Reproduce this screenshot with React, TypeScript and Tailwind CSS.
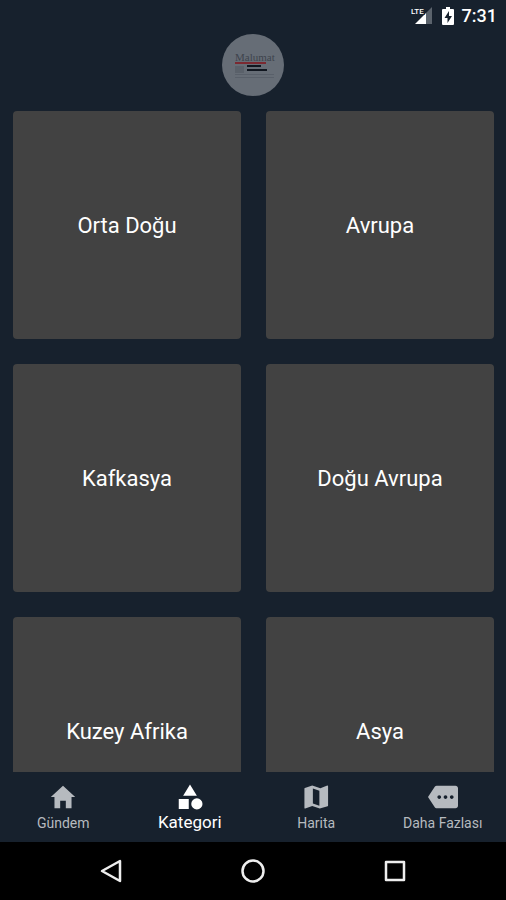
import React from "react";

const categories = ["Orta Doğu", "Avrupa", "Kafkasya", "Doğu Avrupa", "Kuzey Afrika", "Asya"];

const tabs = [
  { label: "Gündem", viewBox: "0 0 512 512", path: "M208 448V320h96v128h97.600V256H464L256 64 48 256h62.400v192z" },
  { label: "Kategori", viewBox: "0 0 24 24", active: true, path: "M12 2 6.500 11h11zM17.500 13a4.500 4.500 0 1 0 0 9 4.500 4.500 0 0 0 0-9zM3 13.500h8v8H3z" },
  {
    label: "Harita",
    viewBox: "0 0 24 24",
    path: "M21.200 2.800l-.16.03L15.500 5 9 2.800 3.100 4.700c-.21.07-.36.25-.36.48V20.700c0 .28.220.5.5.5l.16-.03L9 19.100l6 2.100 6.300-1.900c.21-.07.36-.25.36-.48V3.300c0-.28-.18-.5-.46-.5zM14.700 18.900l-5.200-1.800V5.200l5.200 1.800z",
  },
  {
    label: "Daha Fazlası",
    viewBox: "0 0 24 24",
    path: "M22 3H7c-.69 0-1.23.35-1.59.88L0 12l5.41 8.11c.36.53.97.89 1.66.89H22c1.1 0 2-.9 2-2V5c0-1.1-.9-2-2-2zM9 13.5c-.83 0-1.5-.67-1.5-1.5s.67-1.5 1.5-1.5 1.5.67 1.5 1.5-.67 1.5-1.5 1.5zm5 0c-.83 0-1.5-.67-1.5-1.5s.67-1.5 1.5-1.5 1.5.67 1.5 1.5-.67 1.5-1.5 1.5zm5 0c-.83 0-1.5-.67-1.5-1.5s.67-1.5 1.5-1.5 1.5.67 1.5 1.5-.67 1.5-1.5 1.5z",
  },
];

const StatusBar: React.FC = () => (
  <div className="flex h-8 shrink-0 items-center justify-end gap-2 pr-[9px] text-white">
    <svg className="h-5 w-6" viewBox="0 0 24 20" role="img" aria-label="LTE">
      <path d="M22 1v17H16V7z" fill="#5b636c" />
      <path d="M16 7v11H5z" fill="#fff" />
      <text x="1" y="8" fontSize="8" fontWeight="500" fill="#fff" stroke="#17212d" strokeWidth="2" paintOrder="stroke" className="font-['Roboto',sans-serif]">LTE</text>
    </svg>
    <svg className="h-5 w-3" viewBox="0 0 12 20" role="img" aria-label="Charging">
      <path d="M4 1h4v2h3q1 0 1 1v14q0 1-1 1H1q-1 0-1-1V4q0-1 1-1h3z" fill="#fff" />
      <path d="M7 5 2.500 12H5.500v5L10 10H7z" fill="#17212d" />
    </svg>
    <span className="text-lg font-medium">7:31</span>
  </div>
);

const Logo: React.FC = () => (
  <svg className="h-[62px] w-[62px]" viewBox="0 0 62 62" role="img" aria-label="Malumat">
    <circle cx="31" cy="31" r="31" fill="#666d76" />
    <text x="13" y="27" fontSize="11" fill="#3e444d" className="font-['Liberation_Serif',serif]">Malumat</text>
    <path d="M13 28h31v2H13z" fill="#7b2931" />
    <path d="M13 32h9v7h-9z" fill="#5a616a" />
    <path d="M25 31h14v2H25zM25 35h20v2H25z" fill="#10161f" />
    <path d="M13 40h39v1H13zM13 43h39v1H13z" fill="#59606a" />
  </svg>
);

const TabBar: React.FC = () => (
  <nav className="grid h-[70px] shrink-0 grid-cols-4">
    {tabs.map((tab) => (
      <button
        key={tab.label}
        type="button"
        aria-current={tab.active ? "page" : undefined}
        className={`flex flex-col items-center pt-[10px] whitespace-nowrap ${tab.active ? "text-[17px]/5 text-white" : "text-sm/[22px] text-[#b6babf]"}`}
      >
        <svg className="h-[30px] w-[30px] shrink-0" viewBox={tab.viewBox} fill="currentColor" aria-hidden="true">
          <path d={tab.path} />
        </svg>
        {tab.label}
      </button>
    ))}
  </nav>
);

const SystemNav: React.FC = () => (
  <div className="flex h-[58px] shrink-0 items-center justify-center gap-[118px] bg-black">
    <button type="button" aria-label="Back">
      <svg className="h-6 w-6" viewBox="0 0 24 24" fill="none" stroke="#eee" strokeWidth="2.500" strokeLinejoin="round">
        <path d="M21 2v20L3 12z" />
      </svg>
    </button>
    <button type="button" aria-label="Home">
      <svg className="h-6 w-6" viewBox="0 0 24 24" fill="none" stroke="#eee" strokeWidth="2.500">
        <circle cx="12" cy="12" r="10.500" />
      </svg>
    </button>
    <button type="button" aria-label="Recent apps">
      <svg className="h-6 w-6" viewBox="0 0 24 24" fill="none" stroke="#eee" strokeWidth="2.500" strokeLinejoin="round">
        <path d="M3 3h18v18H3z" />
      </svg>
    </button>
  </div>
);

export default function App() {
  return (
    <div className="flex h-screen flex-col bg-[#17212d] font-['Roboto',sans-serif]">
      <StatusBar />
      <header className="flex h-[66px] shrink-0 items-center justify-center">
        <Logo />
      </header>
      <main className="min-h-0 flex-1 overflow-hidden pt-[13px] pr-3 pl-[13px]">
        <div className="grid grid-cols-2 gap-[25px]">
          {categories.map((name) => (
            <button key={name} type="button" className="aspect-square rounded bg-[#424242] text-[22px] text-white">
              {name}
            </button>
          ))}
        </div>
      </main>
      <TabBar />
      <SystemNav />
    </div>
  );
}
